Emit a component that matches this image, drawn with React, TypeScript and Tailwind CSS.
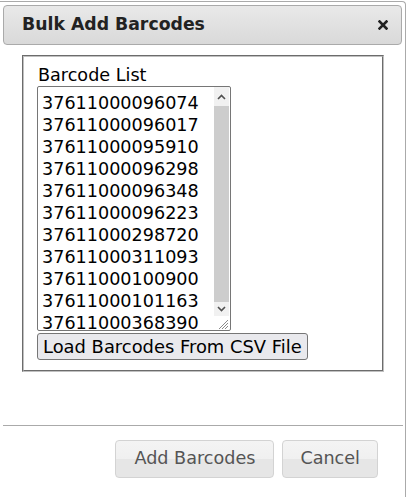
import React from "react";

const barcodes = [
  "37611000096074",
  "37611000096017",
  "37611000095910",
  "37611000096298",
  "37611000096348",
  "37611000096223",
  "37611000298720",
  "37611000311093",
  "37611000100900",
  "37611000101163",
  "37611000368390",
];

export default function App() {
  return (
    <div className="w-[407px] h-[497px] bg-white overflow-hidden pt-px text-[17.6px] [font-family:'DejaVu_Sans',Verdana,sans-serif]">
      <div className="w-[406px] h-[520px] border-t border-r border-[#aaaaaa] rounded-tr-[4px] pt-[3px] pl-[3px] pr-[3px]">
        {/* Title bar */}
        <div className="h-[40px] flex items-center justify-between border border-[#aaaaaa] rounded-[4px] bg-[linear-gradient(#e9e9e9,#d9d9d9)] pl-[18px] pr-[13px]">
          <span className="font-bold text-[#222222] text-[17.3px] leading-none">Bulk Add Barcodes</span>
          <svg width="10" height="10" viewBox="0 0 10 10">
            <path d="M1.5 1.5 L8.5 8.5 M8.5 1.5 L1.5 8.5" stroke="#222" strokeWidth="2.6" strokeLinecap="square" />
          </svg>
        </div>
        {/* Content */}
        <div className="h-[380px] pt-[10px] pl-[19px] pr-[18px]">
          <div className="border-2 [border-style:groove] border-[#c0c0c0] pl-[13px] pr-[12px] pt-[7px] pb-[10px]">
            <div className="text-[#000] leading-[22px] ml-px">Barcode List</div>
            <div className="relative w-[194px] h-[245px] border border-[#767676] rounded-[2px] bg-white overflow-hidden">
              <div className="pl-[4px] pt-[5px] leading-[22px] text-black text-[17.6px]">
                {barcodes.map((b) => (
                  <div key={b}>{b}</div>
                ))}
              </div>
              {/* scrollbar */}
              <div className="absolute top-0 right-px w-[15px] h-full flex flex-col bg-white">
                <div className="h-[19px] bg-[#f1f1f1] flex items-center justify-center">
                  <svg width="9" height="6" viewBox="0 0 9 6">
                    <path d="M1 5 L4.5 1.5 L8 5" stroke="#505050" strokeWidth="1.6" fill="none" />
                  </svg>
                </div>
                <div className="flex-1 bg-[#f1f1f1] flex">
                  <div className="flex-1 bg-[#cdcdcd]" />
                </div>
                <div className="h-[14px] bg-[#f1f1f1] flex items-center justify-center">
                  <svg width="9" height="6" viewBox="0 0 9 6">
                    <path d="M1 1 L4.5 4.5 L8 1" stroke="#505050" strokeWidth="1.6" fill="none" />
                  </svg>
                </div>
                <div className="h-[14px] bg-white flex items-end justify-end">
                  <svg width="13" height="13" viewBox="0 0 13 13">
                    <path d="M12 3 L3 12 M12 6 L6 12 M12 9 L9 12" stroke="#8a8a8a" strokeWidth="1" />
                  </svg>
                </div>
              </div>
            </div>
            <button className="mt-[2px] h-[27px] px-[5px] border border-[#767676] rounded-[3px] bg-[#e9e9ed] text-black text-[17.9px] leading-none">
              Load Barcodes From CSV File
            </button>
          </div>
        </div>
        {/* Button pane */}
        <div className="w-[400px] border-t border-[#aaaaaa] pt-[14px] flex justify-end gap-[8px] pr-[25px]">
          <button className="h-[38px] px-[18px] border border-[#d3d3d3] rounded-[4px] text-[#555555] bg-[linear-gradient(#f4f4f4_0%,#f0f0f0_50%,#e6e6e6_50%,#e6e6e6_100%)] leading-none">
            Add Barcodes
          </button>
          <button className="h-[38px] px-[17px] border border-[#d3d3d3] rounded-[4px] text-[#555555] bg-[linear-gradient(#f4f4f4_0%,#f0f0f0_50%,#e6e6e6_50%,#e6e6e6_100%)] leading-none">
            Cancel
          </button>
        </div>
      </div>
    </div>
  );
}
